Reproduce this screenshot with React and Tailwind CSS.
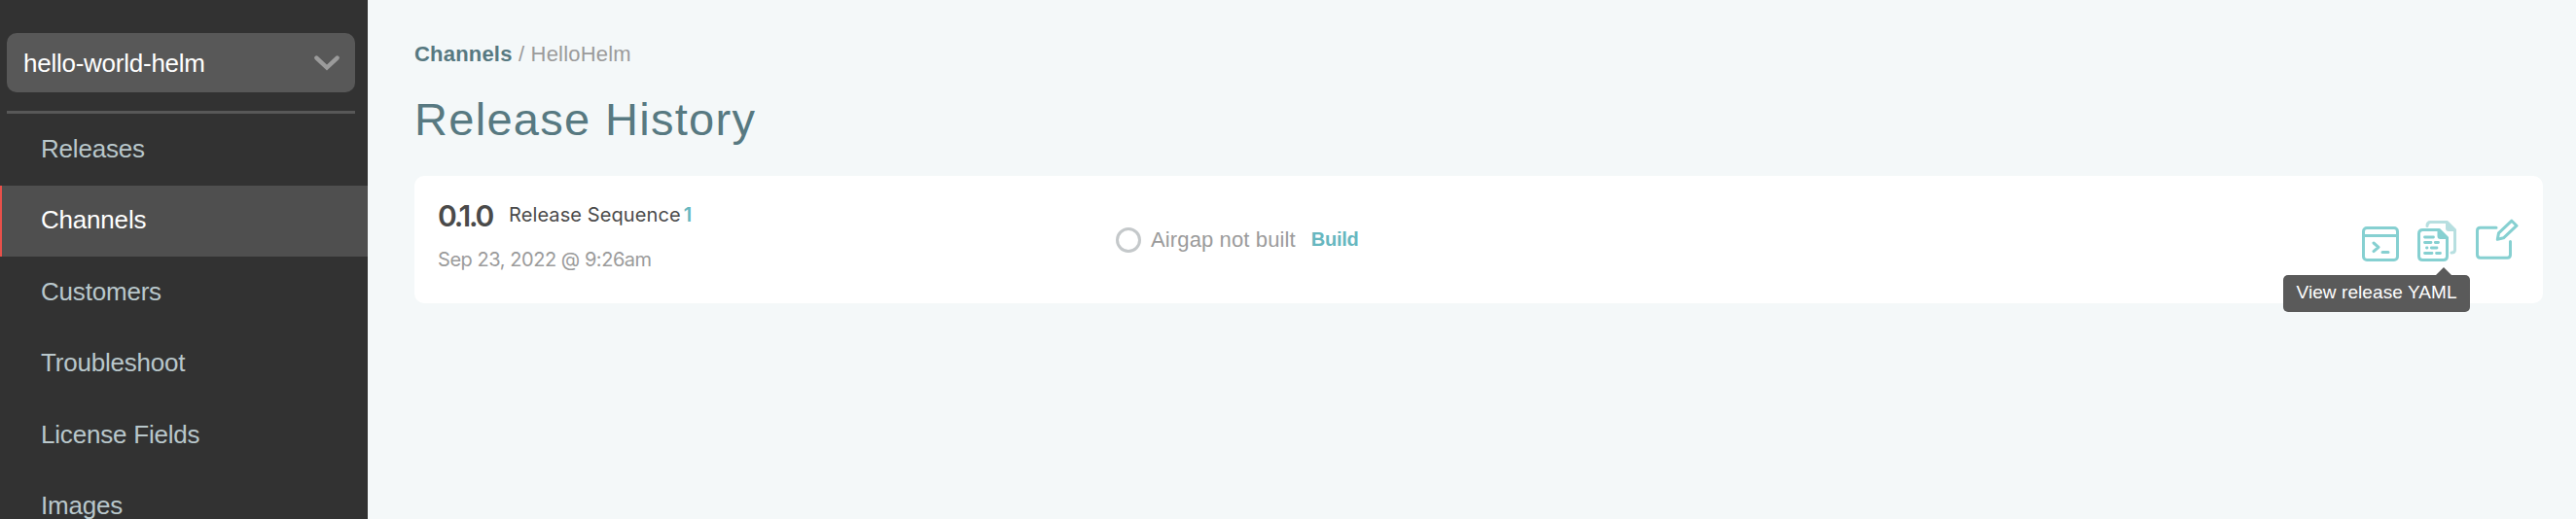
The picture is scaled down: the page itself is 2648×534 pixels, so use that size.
const navItems = ['Releases', 'Channels', 'Customers', 'Troubleshoot', 'License Fields', 'Images'];

function Sidebar() {
  return (
    <aside className="w-[378px] h-full shrink-0 overflow-hidden bg-[#323232]">
      <div className="ml-[7px] w-[358px] pt-[34px]">
        <button className="flex h-[61px] w-full items-center justify-between rounded-[10px] bg-[#585858] pl-[17px] pr-[16px] text-[26px] text-white">
          <span className="leading-[30px] tracking-[-0.25px]">hello-world-helm</span>
          <svg width="26" height="16" viewBox="0 0 26 16" fill="none" stroke="#9b9b9b" strokeWidth="4.4" strokeLinecap="round">
            <path d="M2.4 2.6 13 12.6 23.6 2.6" />
          </svg>
        </button>
        <div className="mt-[19px] h-[3px] bg-[#585858]" />
      </div>
      <nav className="flex flex-col tracking-[-0.2px]">
        {navItems.map((item) => (
          <a
            key={item}
            className={
              item === 'Channels'
                ? 'flex h-[73.5px] shrink-0 items-center border-l-2 border-[#e8504a] bg-[#4f4f4f] pb-px pl-[40px] text-[26px] text-white'
                : 'flex h-[73.5px] shrink-0 items-center border-l-2 border-transparent pb-px pl-[40px] text-[26px] text-[#b9c7cb]'
            }
          >
            {item}
          </a>
        ))}
      </nav>
    </aside>
  );
}

function TerminalIcon() {
  return (
    <svg width="38" height="36" viewBox="0 0 38 36" fill="none" stroke="#86d0d1" strokeWidth="3" strokeLinecap="round" strokeLinejoin="round">
      <rect x="1.5" y="1.5" width="35" height="33" rx="3.5" />
      <path d="M2 9.5H36M12 17l5 4.3-5 4.3M21 26.5h6" />
    </svg>
  );
}

function FilesIcon() {
  return (
    <svg width="40" height="42" viewBox="0 0 40 42" fill="none" strokeLinecap="round" strokeLinejoin="round">
      <path d="M10 5.5Q10 1.5 13.5 1.5H30.5L38.5 9.5V30Q38.5 33 35 33" stroke="#b7dfe0" strokeWidth="3" />
      <path d="M29 1V8Q29 11 32 11H39Z" fill="#b7dfe0" />
      <path d="M5.5 9.5H22.5L30.5 17.5V36.5Q30.5 40.5 26.5 40.5H5.5Q1.5 40.5 1.5 36.5V13.5Q1.5 9.5 5.5 9.5Z" fill="white" stroke="#86d0d1" strokeWidth="3" />
      <path d="M20.5 9V16Q20.5 19 23.5 19H31Z" fill="#86d0d1" />
      <path d="M7.5 17H16.5M7.5 22.5H14M18.3 22.5H21.5M9.5 28H10M14.3 28H20M7.500 33.500H15M19.500 33.500H23.500" stroke="#86d0d1" strokeWidth="2.8" />
    </svg>
  );
}

function EditIcon() {
  return (
    <svg width="44" height="42" viewBox="0 0 44 42" fill="none" stroke="#86d0d1" strokeWidth="3" strokeLinecap="round" strokeLinejoin="round">
      <path d="M21 9.300H4.500Q1.500 9.300 1.500 12.300V37Q1.500 40.300 4.500 40.300H32.500Q35.500 40.300 35.500 37V23.500" />
      <path d="M36.900 2.200 42 7.200 28.500 19.800 22.300 21.300 23.500 14.900Z" />
    </svg>
  );
}

function Tooltip() {
  return (
    <div className="absolute left-[-138px] top-[48px] flex flex-col">
      <svg className="ml-[157px]" width="16" height="8" viewBox="0 0 16 8">
        <path d="M0 8 8 0 16 8Z" fill="#5a5a5a" />
      </svg>
      <div className="flex h-[38px] w-[192px] items-center justify-center whitespace-nowrap rounded-[5px] bg-[#5a5a5a] pb-px text-[19px] tracking-[0.08px] text-white">
        View release YAML
      </div>
    </div>
  );
}

function ReleaseCard() {
  return (
    <section className="mt-[32px] flex h-[131px] w-[2188px] rounded-[10px] bg-white">
      <div className="w-[697px] pl-[24px] pt-[23px] font-['Inter',sans-serif]">
        <div className="flex h-[36px] items-start">
          <span className="w-[73px] text-[30px] font-semibold leading-[36px] tracking-[-2.200px] text-[#4a4a4a]">0.1.0</span>
          <span className="mt-[3px] text-[20px] leading-[28px] tracking-[0.1px] text-[#4a4a4a]">Release Sequence</span>
          <span className="ml-[3px] mt-[3px] text-[20px] font-semibold leading-[28px] text-[#67b7bf]">1</span>
        </div>
        <p className="mt-[13px] text-[20px] leading-[28px] tracking-[-0.45px] text-[#9b9b9b]">Sep 23, 2022 @ 9:26am</p>
      </div>
      <div className="flex h-[131px] grow items-center pl-[24px]">
        <span className="size-[26px] rounded-full border-[3px] border-[#c4c8ca]" />
        <span className="ml-[10px] pb-px text-[22px] tracking-[0.13px] text-[#9b9b9b]">Airgap not built</span>
        <span className="ml-[16px] pb-px text-[20px] font-bold tracking-[-0.3px] text-[#67b7bf]">Build</span>
      </div>
      <div className="flex items-start pr-[25px] pt-[44px]">
        <div className="mt-[8px]"><TerminalIcon /></div>
        <div className="relative ml-[19px] mt-[2px]">
          <FilesIcon />
          <Tooltip />
        </div>
        <div className="ml-[20px]"><EditIcon /></div>
      </div>
    </section>
  );
}

export default function App() {
  return (
    <div className="flex h-[534px] w-[2648px] overflow-hidden bg-[#f4f8f9] font-['Liberation_Sans',Arial,sans-serif]">
      <Sidebar />
      <main className="flex flex-col pl-[48px] pt-[42px]">
        <div className="text-[22px] leading-[28px] tracking-[0.2px] text-[#9b9b9b]">
          <span className="font-bold text-[#577981]">Channels</span> / HelloHelm
        </div>
        <h1 className="mt-[27px] text-[47px] leading-[52px] tracking-[1.300px] text-[#577981]">Release History</h1>
        <ReleaseCard />
      </main>
    </div>
  );
}
